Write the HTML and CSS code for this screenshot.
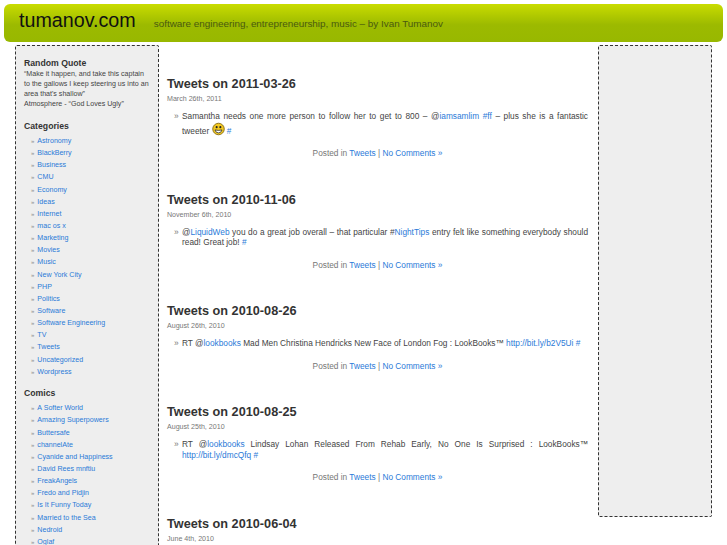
FILE: index.html
```html
<!DOCTYPE html>
<html>
  <head>
    <meta charset="utf8" />
    <title>tumanov.com</title>
    <link rel="stylesheet" href="styles.css">
  </head>
  <body>
    <div id="header">
      <h1><a href="#">tumanov.com</a></h1>
      <span class="tagline">software engineering, entrepreneurship, music – by Ivan Tumanov</span>
    </div>
    <div id="page">
      <div id="leftbar" class="sidebar">
        <h2>Random Quote</h2>
        <p class="quote">“Make it happen, and take this captain to the gallows I keep steering us into an area that's shallow”<br>Atmosphere - “God Loves Ugly”</p>
        <h2>Categories</h2>
        <ul>
          <li><a href="#">Astronomy</a></li>
          <li><a href="#">BlackBerry</a></li>
          <li><a href="#">Business</a></li>
          <li><a href="#">CMU</a></li>
          <li><a href="#">Economy</a></li>
          <li><a href="#">Ideas</a></li>
          <li><a href="#">Internet</a></li>
          <li><a href="#">mac os x</a></li>
          <li><a href="#">Marketing</a></li>
          <li><a href="#">Movies</a></li>
          <li><a href="#">Music</a></li>
          <li><a href="#">New York City</a></li>
          <li><a href="#">PHP</a></li>
          <li><a href="#">Politics</a></li>
          <li><a href="#">Software</a></li>
          <li><a href="#">Software Engineering</a></li>
          <li><a href="#">TV</a></li>
          <li><a href="#">Tweets</a></li>
          <li><a href="#">Uncategorized</a></li>
          <li><a href="#">Wordpress</a></li>
        </ul>
        <h2>Comics</h2>
        <ul>
          <li><a href="#">A Softer World</a></li>
          <li><a href="#">Amazing Superpowers</a></li>
          <li><a href="#">Buttersafe</a></li>
          <li><a href="#">channelAte</a></li>
          <li><a href="#">Cyanide and Happiness</a></li>
          <li><a href="#">David Rees mnftiu</a></li>
          <li><a href="#">FreakAngels</a></li>
          <li><a href="#">Fredo and Pidjin</a></li>
          <li><a href="#">Is It Funny Today</a></li>
          <li><a href="#">Married to the Sea</a></li>
          <li><a href="#">Nedroid</a></li>
          <li><a href="#">Oglaf</a></li>
        </ul>
      </div>
      <div id="content">
        <div class="post">
          <h2>Tweets on 2011-03-26</h2>
          <small>March 26th, 2011</small>
          <ul>
            <li>Samantha needs one more person to follow her to get to 800 – @<a href="#">iamsamlim</a> <a href="#">#ff</a> – plus she is a fantastic tweeter
              <svg class="smiley" width="13" height="14" viewBox="0 0 14 14"><circle cx="7" cy="7" r="6.2" fill="#f2c820" stroke="#8a6d10"/><circle cx="5" cy="5" r="1.1" fill="#222"/><circle cx="9" cy="5" r="1.1" fill="#222"/><path d="M3.2 8 Q7 9 10.8 8 Q10 11.2 7 11.2 Q4 11.2 3.2 8 z" fill="#fff" stroke="#222" stroke-width="0.8"/></svg>
              <a href="#">#</a></li>
          </ul>
          <p class="postmeta">Posted in <a href="#">Tweets</a> | <a href="#">No Comments »</a></p>
        </div>
        <div class="post">
          <h2>Tweets on 2010-11-06</h2>
          <small>November 6th, 2010</small>
          <ul>
            <li>@<a href="#">LiquidWeb</a> you do a great job overall – that particular #<a href="#">NightTips</a> entry felt like something everybody should read! Great job! <a href="#">#</a></li>
          </ul>
          <p class="postmeta">Posted in <a href="#">Tweets</a> | <a href="#">No Comments »</a></p>
        </div>
        <div class="post">
          <h2>Tweets on 2010-08-26</h2>
          <small>August 26th, 2010</small>
          <ul>
            <li>RT @<a href="#">lookbooks</a> Mad Men Christina Hendricks New Face of London Fog : LookBooks™ <a href="#">http://bit.ly/b2V5Ui</a> <a href="#">#</a></li>
          </ul>
          <p class="postmeta">Posted in <a href="#">Tweets</a> | <a href="#">No Comments »</a></p>
        </div>
        <div class="post">
          <h2>Tweets on 2010-08-25</h2>
          <small>August 25th, 2010</small>
          <ul>
            <li>RT @<a href="#">lookbooks</a> Lindsay Lohan Released From Rehab Early, No One Is Surprised : LookBooks™ <a href="#">http://bit.ly/dmcQfq</a> <a href="#">#</a></li>
          </ul>
          <p class="postmeta">Posted in <a href="#">Tweets</a> | <a href="#">No Comments »</a></p>
        </div>
        <div class="post">
          <h2>Tweets on 2010-06-04</h2>
          <small>June 4th, 2010</small>
        </div>
      </div>
      <div id="rightbar" class="sidebar"></div>
    </div>
  </body>
</html>
```

FILE: styles.css
```css
html, body {
  height: 545px;
  overflow: hidden;
}
body {
  margin: 0;
  background: #fff;
  color: #444;
  font-family: "Liberation Sans", Arial, sans-serif;
  font-size: 8.3px;
}
a {
  color: #2a7ad8;
  text-decoration: none;
}

#header {
  display: flex;
  align-items: baseline;
  height: 38px;
  margin: 4px 4px 0;
  padding-left: 15px;
  border-radius: 6px;
  background: linear-gradient(#c9dc00, #9cba00 55%, #98b800);
}
#header h1 {
  margin: 0;
  font-size: 19.7px;
  font-weight: normal;
  line-height: 32px;
}
#header h1 a {
  color: #111;
}
.tagline {
  margin-left: 18px;
  color: #4a5a10;
  font-size: 9.9px;
}

#page {
  display: flex;
  align-items: flex-start;
  margin-top: 3px;
}
.sidebar {
  box-sizing: border-box;
  border: 1px dashed #333;
  border-radius: 2px;
  background: #eee;
}
#leftbar {
  flex: none;
  width: 144px;
  margin-left: 15px;
  padding: 12px 8px 0;
  font-size: 7.1px;
  line-height: 10px;
}
#leftbar h2 {
  margin: 0;
  color: #333;
  font-size: 8.7px;
  line-height: 10px;
}
.quote {
  margin: 1px 0 12px;
  color: #444;
}
#leftbar ul {
  margin: 4px 0 10.5px;
  padding: 0 0 0 7px;
  list-style: none;
}
#leftbar li {
  height: 12.15px;
  line-height: 12px;
  color: #888;
}
#leftbar li:before {
  content: '»';
  margin-right: 3px;
  font-size: 6px;
}

#content {
  flex: none;
  width: 421px;
  margin-left: 8px;
}
.post {
  margin-bottom: 33.5px;
}
.post:first-child {
  padding-top: 31px;
}
.post h2 {
  margin: 0;
  color: #333;
  font-size: 12.7px;
  line-height: 16px;
}
.post small {
  display: block;
  margin-top: 2px;
  color: #777;
  font-size: 7.1px;
  line-height: 10px;
}
.post ul {
  margin: 7px 0 0;
  padding: 0 0 0 15px;
  list-style: none;
}
.post li {
  position: relative;
  line-height: 10.5px;
  text-align: justify;
}
.post li:before {
  content: '»';
  position: absolute;
  left: -8px;
  color: #777;
}
.smiley {
  vertical-align: -2px;
}
.postmeta {
  margin: 12px 0 0;
  color: #777;
  text-align: center;
}

#rightbar {
  flex: none;
  width: 114px;
  height: 472px;
  margin-left: 10px;
}
```
